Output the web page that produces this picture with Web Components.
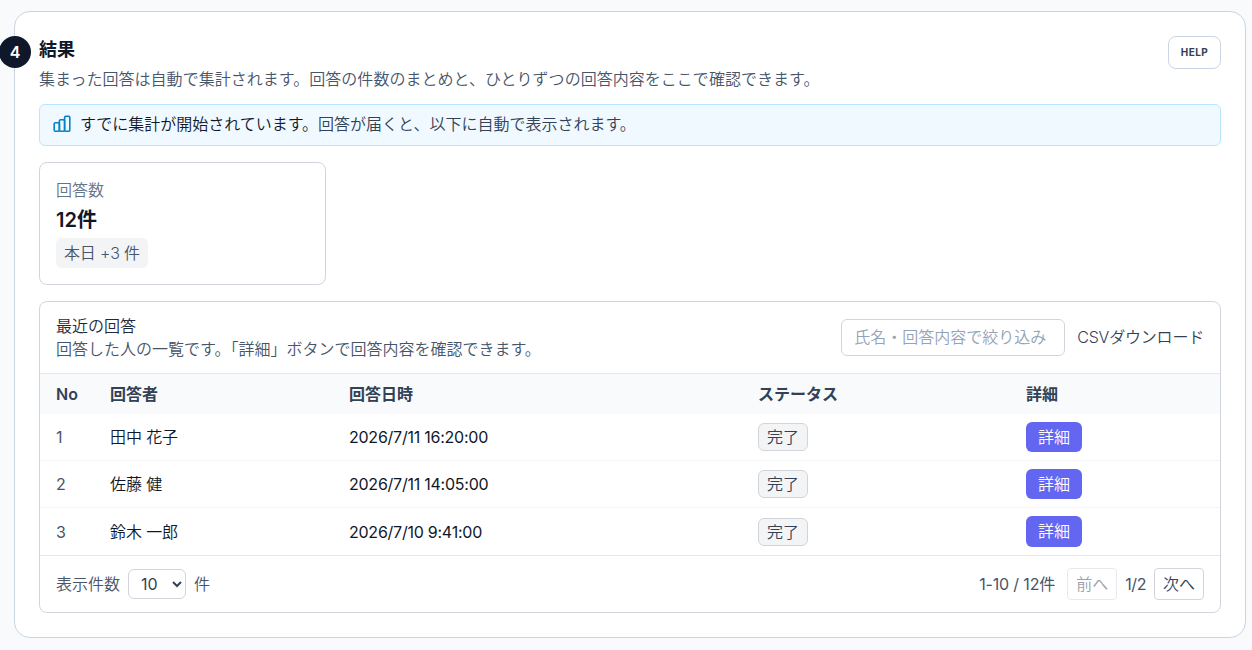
<!DOCTYPE html>
<html lang="ja">
<head>
<meta charset="utf-8">
<title>結果</title>
<style>
    body {
        margin: 0;
        height: 650px;
        overflow: hidden;
        background: #f8fafc;
        color: #0f172a;
        font: 350 16px/24px Inter, "Noto Sans CJK JP", sans-serif;
    }
</style>
</head>
<body>
<step-section step="4" heading="結果">
    <span slot="description">集まった回答は自動で集計されます。回答の件数のまとめと、ひとりずつの回答内容をここで確認できます。</span>
    <info-banner><span slot="title">すでに集計が開始されています。</span>回答が届くと、以下に自動で表示されます。</info-banner>
    <stat-card label="回答数" value="12件">本日 +3 件</stat-card>
    <answer-list>
        <answer-row no="1" name="田中 花子" date="2026/7/11 16:20:00" status="完了"></answer-row>
        <answer-row no="2" name="佐藤 健" date="2026/7/11 14:05:00" status="完了"></answer-row>
        <answer-row no="3" name="鈴木 一郎" date="2026/7/10 9:41:00" status="完了"></answer-row>
        <list-pager slot="footer"></list-pager>
    </answer-list>
</step-section>

<script>
class StepSection extends HTMLElement {

    constructor() {
        super();
        this.shadowDOM = this.attachShadow({mode: "open"});
    }

    connectedCallback() {
        this.shadowDOM.innerHTML = `
        <style>
        :host {
            display: flex;
            flex-direction: column;
            position: relative;
            box-sizing: border-box;
            width: 1232px;
            height: 627px;
            margin: 11px 0 0 14px;
            padding: 24px;
            border: 1px solid #cbd5e1;
            border-radius: 16px;
            background: white;
        }

        .badge {
            position: absolute;
            left: -16px;
            top: 24px;
            width: 32px;
            height: 32px;
            border-radius: 50%;
            background: #0f172a;
            color: white;
            font-size: 16px;
            font-weight: 600;
            line-height: 32px;
            text-align: center;
        }

        header {
            display: flex;
            justify-content: space-between;
            align-items: flex-start;
            height: 68px;
        }

        h2 {
            margin: 0;
            font-size: 18px;
            font-weight: 600;
            line-height: 28px;
        }

        p {
            margin: 3px 0 0;
            line-height: 24px;
            letter-spacing: 0.03px;
            color: #475569;
        }

        button {
            box-sizing: border-box;
            width: 53px;
            height: 33px;
            padding: 0 0 1px;
            border: 1px solid #cbd5e1;
            border-radius: 8px;
            background: white;
            color: #334155;
            font: 700 10px Inter, sans-serif;
            letter-spacing: 0.4px;
        }
        </style>
        <div class="badge">${this.getAttribute("step")}</div>
        <header>
            <div>
                <h2>${this.getAttribute("heading")}</h2>
                <p><slot name="description"></slot></p>
            </div>
            <button type="button">HELP</button>
        </header>
        <slot></slot>`;
    }
}

customElements.define("step-section", StepSection);

class InfoBanner extends HTMLElement {

    constructor() {
        super();
        this.shadowDOM = this.attachShadow({mode: "open"});
    }

    connectedCallback() {
        this.shadowDOM.innerHTML = `
        <style>
        :host {
            display: flex;
            align-items: center;
            gap: 8px;
            box-sizing: border-box;
            height: 42px;
            padding: 0 12px 2px;
            border: 1px solid #bae6fd;
            border-radius: 6px;
            background: #f0f9ff;
            color: #334155;
        }

        ::slotted(span) {
            color: #0f172a;
        }
        </style>
        <svg width="20" height="20" viewBox="0 0 20 20" fill="none" stroke="#0284c7" stroke-width="1.6" stroke-linejoin="round">
            <rect x="2.2" y="8.7" width="5.2" height="8.6" rx="1.2"/>
            <rect x="7.4" y="5.7" width="5.2" height="11.6" rx="1.2"/>
            <rect x="12.6" y="2.2" width="5.2" height="15.1" rx="1.2"/>
        </svg>
        <div><slot name="title"></slot><slot></slot></div>`;
    }
}

customElements.define("info-banner", InfoBanner);

class StatCard extends HTMLElement {

    constructor() {
        super();
        this.shadowDOM = this.attachShadow({mode: "open"});
    }

    connectedCallback() {
        this.shadowDOM.innerHTML = `
        <style>
        :host {
            display: flex;
            flex-direction: column;
            align-items: flex-start;
            box-sizing: border-box;
            width: 287px;
            height: 123px;
            margin-top: 16px;
            padding: 15px 16px;
            border: 1px solid #d1d5db;
            border-radius: 8px;
        }

        .label {
            color: #64748b;
        }

        .value {
            margin: 4px 0;
            font-size: 20px;
            font-weight: 600;
            line-height: 28px;
        }

        .today {
            padding: 3px 8px;
            border-radius: 6px;
            background: #f3f4f6;
            color: #475569;
            letter-spacing: -0.15px;
        }
        </style>
        <div class="label">${this.getAttribute("label")}</div>
        <div class="value">${this.getAttribute("value")}</div>
        <div class="today"><slot></slot></div>`;
    }
}

customElements.define("stat-card", StatCard);

class AnswerList extends HTMLElement {

    constructor() {
        super();
        this.shadowDOM = this.attachShadow({mode: "open"});
    }

    connectedCallback() {
        this.shadowDOM.innerHTML = `
        <style>
        :host {
            --columns: 54px 239px 409px 268px 1fr;
            display: block;
            box-sizing: border-box;
            height: 312px;
            margin-top: 16px;
            border: 1px solid #d1d5db;
            border-radius: 8px;
            overflow: hidden;
        }

        .toolbar {
            display: flex;
            align-items: center;
            gap: 12px;
            height: 71px;
            padding: 0 16px;
            border-bottom: 1px solid #e5e7eb;
            color: #334155;
        }

        .titles {
            flex: 1;
            line-height: 23px;
        }

        .title {
            color: #1e293b;
        }

        .note {
            color: #475569;
        }

        input {
            box-sizing: border-box;
            width: 224px;
            height: 37px;
            padding: 0 12px 2px;
            border: 1px solid #d1d5db;
            border-radius: 6px;
            font: inherit;
        }

        input::placeholder {
            color: #94a3b8;
        }

        .csv {
            padding-bottom: 2px;
            letter-spacing: -0.2px;
        }

        .head {
            display: grid;
            grid-template-columns: var(--columns);
            align-items: center;
            height: 40px;
            background: #f8fafc;
            color: #334155;
            font-weight: 600;
        }

        .head span {
            padding-left: 16px;
        }
        </style>
        <div class="toolbar">
            <div class="titles">
                <div class="title">最近の回答</div>
                <div class="note">回答した人の一覧です。「詳細」ボタンで回答内容を確認できます。</div>
            </div>
            <input type="text" placeholder="氏名・回答内容で絞り込み">
            <span class="csv">CSVダウンロード</span>
        </div>
        <div class="head">
            <span>No</span><span>回答者</span><span>回答日時</span><span>ステータス</span><span>詳細</span>
        </div>
        <slot></slot>
        <slot name="footer"></slot>`;
    }
}

customElements.define("answer-list", AnswerList);

class AnswerRow extends HTMLElement {

    constructor() {
        super();
        this.shadowDOM = this.attachShadow({mode: "open"});
    }

    connectedCallback() {
        this.shadowDOM.innerHTML = `
        <style>
        :host {
            display: grid;
            grid-template-columns: var(--columns);
            align-items: center;
            box-sizing: border-box;
            height: 47px;
            border-bottom: 1px solid #f3f4f6;
        }

        :host(:nth-of-type(3)) {
            height: 48px;
            border-bottom-color: #e5e7eb;
        }

        div {
            padding-left: 16px;
        }

        .no {
            color: #475569;
            font-weight: 400;
        }

        .name {
            letter-spacing: -0.1px;
        }

        .date {
            font-weight: 400;
            letter-spacing: -0.24px;
        }

        .status {
            display: block;
            box-sizing: border-box;
            width: 50px;
            height: 28px;
            border: 1px solid #d1d5db;
            border-radius: 6px;
            background: #f3f4f6;
            color: #334155;
            line-height: 26px;
            text-align: center;
        }

        button {
            display: block;
            width: 56px;
            height: 30px;
            padding: 0 0 1px;
            border: none;
            border-radius: 6px;
            background: #6366f1;
            color: white;
            font: inherit;
        }

        :host(:nth-of-type(3)) button {
            height: 31px;
        }
        </style>
        <div class="no">${this.getAttribute("no")}</div>
        <div class="name">${this.getAttribute("name")}</div>
        <div class="date">${this.getAttribute("date")}</div>
        <div><span class="status">${this.getAttribute("status")}</span></div>
        <div><button type="button">詳細</button></div>`;
    }
}

customElements.define("answer-row", AnswerRow);

class ListPager extends HTMLElement {

    constructor() {
        super();
        this.shadowDOM = this.attachShadow({mode: "open"});
    }

    connectedCallback() {
        this.shadowDOM.innerHTML = `
        <style>
        :host {
            display: flex;
            align-items: center;
            gap: 8px;
            height: 56px;
            padding: 0 16px;
            color: #475569;
        }

        select {
            box-sizing: border-box;
            width: 58px;
            height: 30px;
            padding: 0 8px;
            border: 1px solid #d1d5db;
            border-radius: 6px;
            background: white;
            color: #334155;
            font: inherit;
            font-weight: 400;
        }

        .range {
            margin-left: auto;
            margin-right: 4px;
            font-weight: 400;
            letter-spacing: -0.15px;
        }

        .page {
            font-weight: 400;
            letter-spacing: -0.4px;
        }

        button {
            box-sizing: border-box;
            width: 50px;
            height: 32px;
            padding: 0;
            border: 1px solid #d1d5db;
            border-radius: 4px;
            background: white;
            color: #334155;
            font: inherit;
        }

        button:disabled {
            opacity: 0.5;
        }
        </style>
        <span>表示件数</span>
        <select><option>10</option></select>
        <span>件</span>
        <span class="range">1-10 / 12件</span>
        <button type="button" disabled>前へ</button>
        <span class="page">1/2</span>
        <button type="button">次へ</button>`;
    }
}

customElements.define("list-pager", ListPager);
</script>
</body>
</html>
